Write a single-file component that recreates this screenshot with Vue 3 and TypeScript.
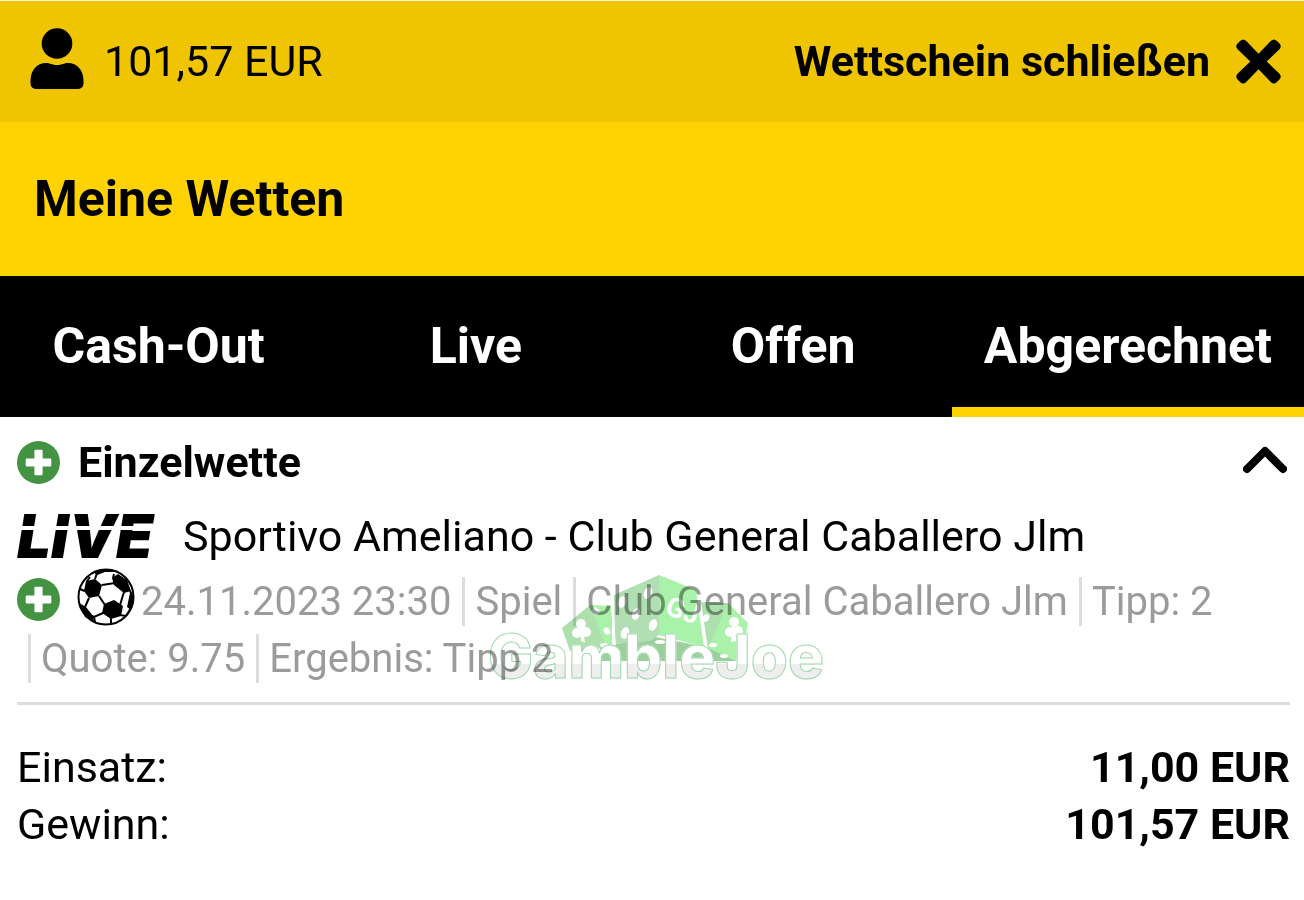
<script setup lang="ts">
import { ref } from 'vue'

interface Tab {
  id: string
  label: string
}

const tabs: Tab[] = [
  { id: 'cashout', label: 'Cash-Out' },
  { id: 'live', label: 'Live' },
  { id: 'open', label: 'Offen' },
  { id: 'settled', label: 'Abgerechnet' },
]
const active = ref('settled')
const expanded = ref(true)

const details: string[] = [
  'Spiel',
  'Club General Caballero Jlm',
  'Tipp: 2',
  'Quote: 9.75',
  'Ergebnis: Tipp 2',
]
const totals = [
  { label: 'Einsatz:', value: '11,00 EUR' },
  { label: 'Gewinn:', value: '101,57 EUR' },
]
</script>

<template>
  <div class="page">
    <header class="topbar">
      <div class="account">
        <svg class="user" viewBox="0 0 54 62" aria-hidden="true">
          <circle cx="27" cy="15.500" r="15.300" />
          <path d="M0.500 53C0.500 42 7 35 16 35C20 35 22 37 27 37S34 35 38 35C47 35 53.500 42 53.500 53V55Q53.500 61 47 61H7Q0.500 61 0.500 55Z" />
        </svg>
        <span>101,57 EUR</span>
      </div>
      <button class="close" type="button">
        <span>Wettschein schließen</span>
        <svg class="cross" viewBox="0 0 44 44" aria-hidden="true">
          <path d="M1.500 10Q-1 7 1.500 4.500L4 2Q7 -1 10 2L22 14.500L34 2Q37 -1 40 2L42.500 4.500Q45 7 42.500 10L30 22L42.500 34Q45 37 42.500 39.500L40 42Q37 45 34 42L22 29.500L10 42Q7 45 4 42L1.500 39.500Q-1 37 1.500 34L14 22Z" />
        </svg>
      </button>
    </header>

    <div class="title"><h1>Meine Wetten</h1></div>

    <nav class="tabs">
      <button
        v-for="tab in tabs"
        :key="tab.id"
        type="button"
        class="tab"
        :class="{ active: tab.id === active }"
        @click="active = tab.id"
      >{{ tab.label }}</button>
    </nav>

    <main class="bet">
      <button class="bet-head" type="button" :aria-expanded="expanded" @click="expanded = !expanded">
        <svg class="plus" viewBox="0 0 42 42" aria-hidden="true">
          <circle cx="21" cy="21" r="21" />
          <path d="M18 8.500h6a1 1 0 0 1 1 1V17h7.500a1 1 0 0 1 1 1v6a1 1 0 0 1-1 1H25v7.500a1 1 0 0 1-1 1h-6a1 1 0 0 1-1-1V25H9.500a1 1 0 0 1-1-1v-6a1 1 0 0 1 1-1H17V9.500a1 1 0 0 1 1-1z" />
        </svg>
        <span class="kind">Einzelwette</span>
        <svg class="chevron" viewBox="0 0 44 28" aria-hidden="true">
          <path d="M4 23L22 5L40 23" />
        </svg>
      </button>

      <div class="match">
        <span class="live">LIVE</span>
        <span>Sportivo Ameliano - Club General Caballero Jlm</span>
      </div>

      <div class="selection">
        <svg class="plus" viewBox="0 0 42 42" aria-hidden="true">
          <circle cx="21" cy="21" r="21" />
          <path d="M18 8.500h6a1 1 0 0 1 1 1V17h7.500a1 1 0 0 1 1 1v6a1 1 0 0 1-1 1H25v7.500a1 1 0 0 1-1 1h-6a1 1 0 0 1-1-1V25H9.500a1 1 0 0 1-1-1v-6a1 1 0 0 1 1-1H17V9.500a1 1 0 0 1 1-1z" />
        </svg>
        <svg class="ball" viewBox="0 0 58 58" aria-hidden="true">
          <circle cx="29" cy="29" r="27.500" fill="#fff" />
          <g fill="#000">
            <path d="M9 13L18 11L25 17L22 28L12 30L7 23Z" />
            <path d="M35 10L41 6L50 12L54 23L47 25L37 17Z" />
            <path d="M27 36L37 32L46 38L44 48L34 51L25 45Z" />
            <path d="M2 35L9 39L16 48L17 54L8 49Z" />
            <path d="M53 25L57 28L54 42L50 39Z" />
            <path d="M16 4L28 1L39 4L28 4L20 7Z" />
          </g>
          <g fill="none" stroke="#000" stroke-width="2">
            <circle cx="29" cy="29" r="27.500" />
            <path d="M18 11L20 5M25 17L38 15M22 28L28 37M12 30L8 39M7.500 23L3 21M10 13L13 9M37 6L36 10M47 24L43 37M53 23L55 27M43 47L49 48L54 40M34 50L34 56M26 45L17 49L15 48M17 49L18 54" />
          </g>
        </svg>
        <div class="details">
          <span class="date">24.11.2023 23:30</span>
          <span v-for="item in details" :key="item" class="detail">{{ item }}</span>
        </div>

        <div class="watermark">
          <svg class="dice" viewBox="0 0 186 86">
            <path fill="#aee0ae" d="M0 53L28 30L50 72L8 76Z" />
            <path fill="#aaf2aa" d="M28 30L50 31V74L43 70Z" />
            <path fill="#aee0ae" d="M139 27L166 28L154 64L146 74Z" />
            <path fill="#aaf2aa" d="M166 28L186 48L183 66L174 86L146 74Z" />
            <path fill="#9ccf9c" d="M38 73L88 61L144 72L174 86H38Z" />
            <path fill="#b1dfb3" d="M52 20L97 0V60L88 66L53 69Z" />
            <path fill="#a9f2aa" d="M97 0L134 15L142 72L97 60Z" />
            <path d="M50 31L53 70M137 25L143 71" stroke="#fff" stroke-width="2" />
            <g fill="#fff">
              <ellipse cx="60" cy="27" rx="4" ry="6" transform="rotate(20 60 27)" />
              <ellipse cx="86" cy="18" rx="4" ry="6" transform="rotate(20 86 18)" />
              <ellipse cx="74" cy="39" rx="4" ry="6" transform="rotate(20 74 39)" />
              <ellipse cx="91" cy="50" rx="4" ry="6" transform="rotate(20 91 50)" />
              <ellipse cx="63" cy="58" rx="4" ry="6" transform="rotate(20 63 58)" />
              <ellipse cx="34" cy="36" rx="4" ry="3" transform="rotate(40 34 36)" />
              <ellipse cx="45" cy="56" rx="3" ry="4" transform="rotate(-35 45 56)" />
              <ellipse cx="144" cy="43" rx="3" ry="4" transform="rotate(25 144 43)" />
              <ellipse cx="42" cy="70" rx="4" ry="2" />
              <ellipse cx="98" cy="67" rx="5" ry="2" />
              <ellipse cx="151" cy="70" rx="4" ry="2" />
              <ellipse cx="162" cy="81" rx="4" ry="2" />
              <circle cx="19" cy="49" r="5" />
              <circle cx="15" cy="58" r="5" />
              <circle cx="24" cy="57" r="5" />
              <path d="M18 52L21 52L23 68L19 66Z" />
              <circle cx="172" cy="47" r="5" />
              <circle cx="168" cy="57" r="5" />
              <circle cx="176" cy="56" r="5" />
              <path d="M170 52L173 52L174 66L169 67Z" />
              <text class="monogram" x="102" y="39" transform="rotate(18 102 39)">GJ</text>
            </g>
          </svg>
          <span class="brand">GambleJoe</span>
        </div>
      </div>

      <dl class="totals">
        <div v-for="row in totals" :key="row.label" class="total">
          <dt>{{ row.label }}</dt>
          <dd>{{ row.value }}</dd>
        </div>
      </dl>
    </main>
  </div>
</template>

<style>
body {
  background: #fff;
}
</style>

<style scoped>
.page {
  font-family: Roboto, "Liberation Sans", sans-serif;
  font-size: 43px;
  line-height: 57px;
  color: #000;
  border-top: 1px solid #fbf6e0;
}
svg {
  display: block;
  flex: none;
}
button {
  font: inherit;
  color: inherit;
  background: none;
  border: 0;
  padding: 0;
  margin: 0;
  cursor: pointer;
}
.topbar {
  display: flex;
  align-items: center;
  justify-content: space-between;
  height: 121px;
  padding: 0 23px 0 30px;
  background: #eec500;
}
.account,
.close {
  display: flex;
  align-items: center;
}
.account {
  gap: 20px;
}
.user {
  width: 54px;
  height: 62px;
  margin-bottom: 6px;
}
.close {
  gap: 26px;
  font-weight: 700;
}
.cross {
  width: 45px;
  height: 45px;
}
.title {
  display: flex;
  align-items: center;
  height: 154px;
  padding: 0 34px;
  background: #ffd204;
}
h1 {
  margin: 0;
  font-size: 50px;
  font-weight: 700;
}
.tabs {
  display: flex;
  background: #000;
}
.tab {
  flex: 1 0 0;
  height: 141px;
  padding: 0 32px;
  border-top: 10px solid transparent;
  border-bottom: 10px solid transparent;
  color: #fff;
  font-size: 50px;
  font-weight: 700;
}
.tab.active {
  border-bottom-color: #ffd204;
}
.bet {
  padding: 17px 14px 0 17px;
}
.bet-head {
  display: flex;
  align-items: center;
  width: 100%;
  gap: 18px;
  text-align: left;
}
.plus {
  width: 43px;
  height: 43px;
}
.plus circle {
  fill: #439343;
}
.plus path {
  fill: #fff;
}
.kind {
  flex: 1;
  font-weight: 700;
}
.chevron {
  width: 44px;
  height: 28px;
  margin: 0 3px 6px 0;
}
.chevron path {
  fill: none;
  stroke: #000;
  stroke-width: 8;
  stroke-linecap: round;
  stroke-linejoin: round;
}
.match {
  display: flex;
  align-items: center;
  gap: 14px;
  padding: 17px 0 8px;
}
.live {
  flex: none;
  min-width: 152px;
  font-family: Inter, sans-serif;
  font-size: 60px;
  font-style: italic;
  font-weight: 900;
  line-height: 57px;
  color: transparent;
  background: linear-gradient(#000 18px, transparent 18px, transparent 22px, #000 22px);
  background-clip: text;
  -webkit-background-clip: text;
}
.selection {
  position: relative;
  display: flex;
  align-items: flex-start;
  padding-bottom: 15px;
  border-bottom: 3px solid #ddd;
  color: #9b9b9b;
  font-size: 40px;
}
.selection > .plus {
  margin: 5px 17px 0 0;
}
.selection > .ball {
  width: 58px;
  height: 58px;
  margin: -5px 6px 0 0;
}
.details {
  flex: 1;
  margin-left: -124px;
}
.date {
  margin-left: 124px;
}
.detail {
  display: inline-block;
  line-height: 49px;
  margin-left: 11px;
  padding-left: 10px;
  border-left: 3px solid #ddd;
}
.watermark {
  position: absolute;
  left: 471px;
  top: 2px;
  width: 340px;
  height: 112px;
  mix-blend-mode: multiply;
}
.dice {
  width: 186px;
  height: 86px;
  margin-left: 74px;
}
.monogram {
  font-family: Roboto, sans-serif;
  font-size: 27px;
  font-weight: 700;
}
.brand {
  position: absolute;
  left: 0;
  bottom: 2px;
  font-family: Inter, sans-serif;
  font-size: 60px;
  font-weight: 800;
  line-height: 58px;
  color: transparent;
  background: linear-gradient(#fff 64%, #eee 64%);
  background-clip: text;
  -webkit-background-clip: text;
  -webkit-text-stroke: 1px #9fd8ac;
}
.totals {
  margin: 34px 0 0;
}
.total {
  display: flex;
  justify-content: space-between;
}
dd {
  margin: 0;
  font-weight: 700;
}
</style>
